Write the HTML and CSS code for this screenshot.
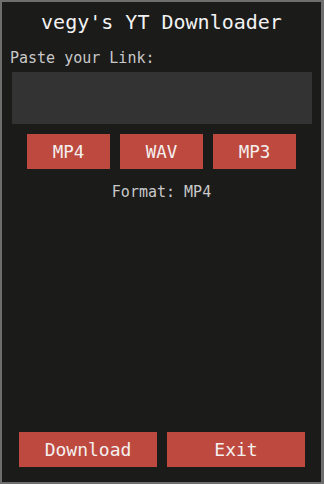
FILE: index.html
```html
<!DOCTYPE html>
<html>
<head>
<meta charset="utf-8">
<link rel="stylesheet" href="styles.css">
</head>
<body>
<div class="frame">
  <h1 class="title">vegy's YT Downloader</h1>
  <div class="label">Paste your Link:</div>
  <div class="input"></div>
  <div class="formats">
    <button class="btn small">MP4</button>
    <button class="btn small">WAV</button>
    <button class="btn small">MP3</button>
  </div>
  <div class="status">Format: MP4</div>
  <div class="actions">
    <button class="btn big">Download</button>
    <button class="btn big">Exit</button>
  </div>
</div>
</body>
</html>
```
FILE: styles.css
```css
html, body {
  margin: 0;
  padding: 0;
  background: #1b1b1a;
}
.frame {
  box-sizing: border-box;
  width: 324px;
  height: 484px;
  border-style: solid;
  border-color: #6e6e6e;
  border-width: 2px 3px 2px 2px;
  background: #1b1b1a;
  display: flex;
  flex-direction: column;
  font-family: "DejaVu Sans Mono", "Liberation Mono", monospace;
}
.title {
  margin: 8px 0 0;
  font-size: 20px;
  line-height: 24px;
  font-weight: normal;
  color: #f2f2f2;
  text-align: center;
}
.label {
  margin: 15px 0 0 8px;
  font-size: 15px;
  line-height: 18px;
  color: #c9c9c9;
}
.input {
  margin: 5px 0 0 10px;
  width: 300px;
  height: 52px;
  background: #333333;
}
.formats {
  display: flex;
  justify-content: center;
  gap: 10px;
  margin-top: 10px;
}
.btn {
  border: none;
  background: #be4a3f;
  color: #f4f0f0;
  font-family: "DejaVu Sans Mono", "Liberation Mono", monospace;
  padding: 0;
  margin: 0;
}
.small {
  width: 83px;
  height: 35px;
  font-size: 17.5px;
}
.status {
  margin-top: 14px;
  font-size: 15px;
  line-height: 18px;
  color: #c9c9c9;
  text-align: center;
}
.actions {
  margin-top: auto;
  margin-bottom: 15px;
  display: flex;
  justify-content: center;
  gap: 10px;
  padding-left: 1px;
}
.big {
  width: 138px;
  height: 35px;
  font-size: 18px;
}
```
